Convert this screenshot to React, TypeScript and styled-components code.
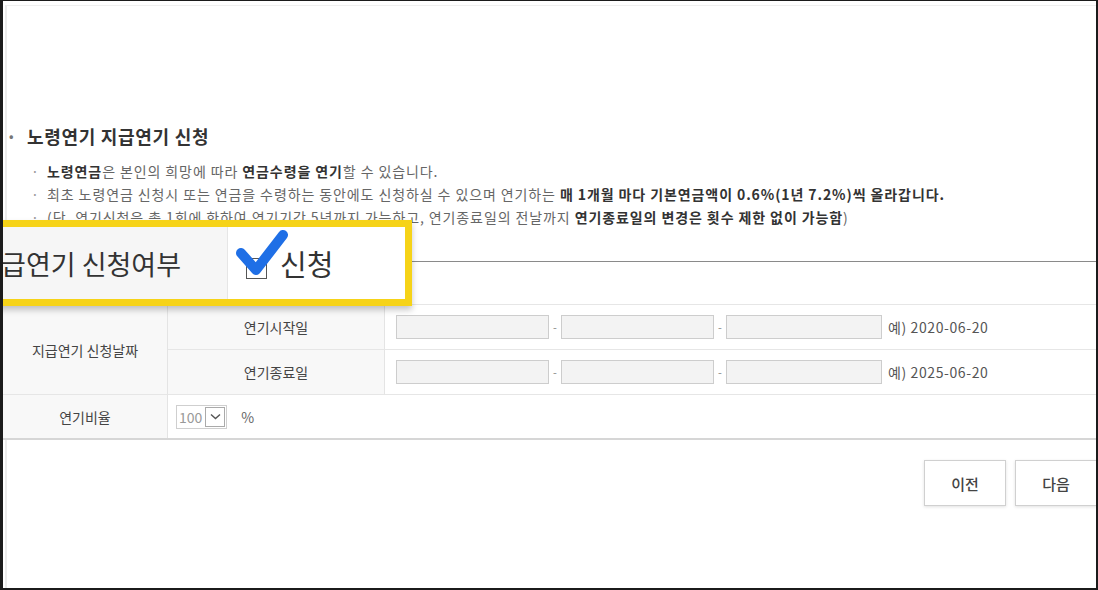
import React from 'react';
import styled, { createGlobalStyle } from 'styled-components';

const GlobalStyle = createGlobalStyle`
  html, body { margin: 0; padding: 0; background: #fff; }
  body { font-family: "Noto Sans CJK KR", "Noto Sans", sans-serif; }
`;

const Screen = styled.div`
  position: relative;
  width: 1098px;
  height: 590px;
  box-sizing: border-box;
  border-style: solid;
  border-color: #1b1b1b;
  border-width: 1px 2px 2px 3px;
  overflow: hidden;
  background: #fff;
`;

const Inner = styled.div`
  height: 100%;
  margin: 4px 0 0 2px;
  border-top: 1px solid #efefef;
  border-left: 2px solid #ececec;
  box-sizing: border-box;
  padding-top: 120px;
`;

const Title = styled.h2`
  display: flex;
  margin: 0;
  padding-left: 2px;
  font-size: 18px;
  line-height: 20px;
  font-weight: 700;
  letter-spacing: 0.7px;
  color: #333;
`;

const TitleDot = styled.span`
  width: 18px;
  color: #777;
  font-size: 12px;
`;

const Notes = styled.ul`
  list-style: none;
  margin: 14px 0 0;
  padding-left: 24px;
`;

const Note = styled.li`
  display: flex;
  font-size: 14px;
  line-height: 23px;
  letter-spacing: 0.9px;
  color: #666;
  white-space: nowrap;
  b { color: #333; font-weight: 700; }
`;

const NoteDot = styled.span`
  width: 16px;
  color: #999;
`;

const Grid = styled.div`
  display: grid;
  grid-template-columns: 165px 217px 1fr;
  grid-template-rows: 43px 45px 45px 43px;
  margin: 32px 0 0 -4px;
  border-top: 1px solid #8a8a8a;
  border-bottom: 2px solid #d6d6d6;
`;

const Cell = styled.div<{ $head?: boolean; $col?: string; $row?: string; $last?: boolean }>`
  grid-column: ${(p) => p.$col || 'auto'};
  grid-row: ${(p) => p.$row || 'auto'};
  display: flex;
  align-items: center;
  justify-content: ${(p) => (p.$head ? 'center' : 'flex-start')};
  padding: ${(p) => (p.$head ? '0' : '0 0 0 11px')};
  background: ${(p) => (p.$head ? '#f8f8f8' : '#fff')};
  border-right: ${(p) => (p.$head ? '1px solid #e4e4e4' : 'none')};
  border-bottom: ${(p) => (p.$last ? 'none' : '1px solid #e6e6e6')};
  font-size: 14px;
  color: #444;
`;

const DateBox = styled.div<{ $wide?: boolean }>`
  width: ${(p) => (p.$wide ? '156px' : '153px')};
  height: 24px;
  box-sizing: border-box;
  border: 1px solid #cdcdcd;
  background: #f3f3f3;
`;

const Dash = styled.span`
  width: 12px;
  text-align: center;
  color: #888;
  font-size: 11px;
`;

const Example = styled.span`
  margin-left: 6px;
  color: #555;
  font-size: 14px;
  letter-spacing: 0.6px;
`;

const Select = styled.div`
  display: flex;
  align-items: center;
  height: 24px;
  box-sizing: border-box;
  border: 1px solid #cfcfcf;
  margin-left: -3px;
  font-size: 14px;
  color: #999;
  span { padding: 0 3px 0 2px; }
`;

const Caret = styled.div`
  width: 20px;
  height: 20px;
  margin-right: 1px;
  box-sizing: border-box;
  border: 1px solid #aaa;
  display: flex;
  align-items: center;
  justify-content: center;
`;

const Unit = styled.span`
  margin-left: 14px;
  color: #666;
`;

const Buttons = styled.div`
  display: flex;
  justify-content: flex-end;
  gap: 9px;
  margin: 20px -1px 0 0;
`;

const Button = styled.button`
  width: 82px;
  height: 46px;
  border: 1px solid #d0d0d0;
  background: #fff;
  box-shadow: 0 1px 3px rgba(0, 0, 0, 0.12);
  font-family: inherit;
  font-size: 15px;
  font-weight: 500;
  color: #444;
`;

const Callout = styled.div`
  position: absolute;
  left: -85px;
  top: 219px;
  width: 494px;
  height: 86px;
  box-sizing: border-box;
  display: flex;
  border: 7px solid #f6d318;
  background: #fff;
  box-shadow: 0 4px 6px rgba(0, 0, 0, 0.22);
`;

const CalloutLabel = styled.div`
  width: 303px;
  box-sizing: border-box;
  display: flex;
  align-items: center;
  justify-content: flex-end;
  padding-right: 46px;
  background: #f6f6f6;
  border-right: 1px solid #e6e6e6;
  font-size: 27px;
  white-space: nowrap;
  color: #333;
`;

const CalloutValue = styled.div`
  position: relative;
  flex: 1;
  display: flex;
  align-items: center;
  padding-left: 18px;
  font-size: 29px;
  color: #333;
`;

const Box = styled.span`
  width: 21px;
  height: 21px;
  margin: 10px 13px 0 0;
  box-sizing: border-box;
  border: 1.5px solid #555;
  background: #fff;
`;

const Tick = styled.svg`
  position: absolute;
  left: 8px;
  top: 2px;
`;

function DateRow() {
  return (
    <>
      <DateBox />
      <Dash>-</Dash>
      <DateBox />
      <Dash>-</Dash>
      <DateBox $wide />
    </>
  );
}

export default function App() {
  return (
    <Screen>
      <GlobalStyle />
      <Inner>
        <Title>
          <TitleDot>•</TitleDot>노령연기 지급연기 신청
        </Title>
        <Notes>
          <Note>
            <NoteDot>·</NoteDot>
            <span>
              <b>노령연금</b>은 본인의 희망에 따라 <b>연금수령을 연기</b>할 수 있습니다.
            </span>
          </Note>
          <Note>
            <NoteDot>·</NoteDot>
            <span>
              최초 노령연금 신청시 또는 연금을 수령하는 동안에도 신청하실 수 있으며 연기하는{' '}
              <b>매 1개월 마다 기본연금액이 0.6%(1년 7.2%)씩 올라갑니다.</b>
            </span>
          </Note>
          <Note>
            <NoteDot>·</NoteDot>
            <span>
              (단, 연기신청은 총 1회에 한하여 연기기간 5년까지 가능하고, 연기종료일의 전날까지{' '}
              <b>연기종료일의 변경은 횟수 제한 없이 가능함</b>)
            </span>
          </Note>
        </Notes>

        <Grid>
          <Cell $head $col="1 / 3" />
          <Cell />
          <Cell $head $row="2 / 4">지급연기 신청날짜</Cell>
          <Cell $head>연기시작일</Cell>
          <Cell>
            <DateRow />
            <Example>예) 2020-06-20</Example>
          </Cell>
          <Cell $head>연기종료일</Cell>
          <Cell>
            <DateRow />
            <Example>예) 2025-06-20</Example>
          </Cell>
          <Cell $head $last>연기비율</Cell>
          <Cell $col="2 / 4" $last>
            <Select>
              <span>100</span>
              <Caret>
                <svg width="11" height="7" viewBox="0 0 11 7">
                  <path d="M1 1.5 L5.5 5.5 L10 1.5" fill="none" stroke="#555" strokeWidth="1.4" />
                </svg>
              </Caret>
            </Select>
            <Unit>%</Unit>
          </Cell>
        </Grid>

        <Buttons>
          <Button>이전</Button>
          <Button>다음</Button>
        </Buttons>
      </Inner>

      <Callout>
        <CalloutLabel>지급연기 신청여부</CalloutLabel>
        <CalloutValue>
          <Box />
          신청
          <Tick width="54" height="48" viewBox="0 0 54 48">
            <path
              d="M5 24 L20 41 L47 6"
              fill="none"
              stroke="#1f6fe6"
              strokeWidth="10"
              strokeLinecap="round"
              strokeLinejoin="round"
            />
          </Tick>
        </CalloutValue>
      </Callout>
    </Screen>
  );
}
